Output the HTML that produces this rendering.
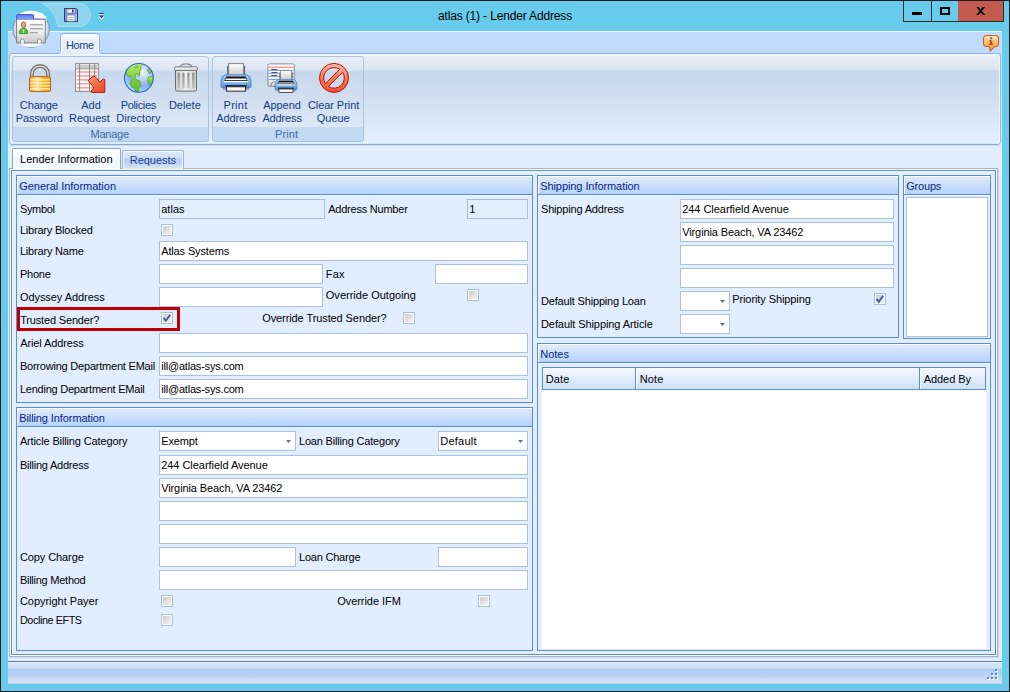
<!DOCTYPE html><html><head><meta charset="utf-8"><title>atlas (1) - Lender Address</title><style>html,body{margin:0;padding:0;width:1010px;height:692px;overflow:hidden;background:#1e1b1c;}body{position:relative;font-family:"Liberation Sans",sans-serif;font-size:11px;}div,svg,span.t{position:absolute;}svg{overflow:visible;}span.t{white-space:nowrap;}</style></head><body>
<div style="left:0px;top:0px;width:1010px;height:692px;background:#1e1b1c;"></div>
<div style="left:1px;top:1px;width:1008px;height:690px;background:#67cbeb;"></div>
<span class="t " style="top:9px;line-height:14px;font-size:12px;color:#000;letter-spacing:-0.153px;left:405px;width:200px;text-align:center;">atlas (1) - Lender Address</span>
<div style="left:903px;top:1px;width:101px;height:21px;background:#67cbeb;border:1px solid #2b2b2b;border-top:none;box-sizing:border-box;"></div>
<div style="left:931px;top:1px;width:1px;height:20px;background:#2b2b2b;"></div>
<div style="left:958px;top:1px;width:45px;height:20px;background:#c35a50;"></div>
<div style="left:912px;top:12px;width:10px;height:3px;background:#000;"></div>
<div style="left:940px;top:7px;width:10px;height:8px;border:2px solid #000;box-sizing:border-box;"></div>
<svg style="left:976px;top:7px" width="9.4" height="8" viewBox="0 0 10 9" preserveAspectRatio="none"><path d="M0.3 0h2.6l2.1 2.7L7.1 0h2.6L6.3 4.4 9.9 9H7.3L5 6.1 2.7 9H0.1l3.6-4.6z" fill="#000"/></svg>
<svg style="left:36px;top:2px" width="60" height="26" viewBox="0 0 60 26"><path d="M6.5 1.5H43A11.5 11.5 0 0 1 43 24.5H21.5A27 27 0 0 0 6.5 1.5Z" fill="#8fd4ed" stroke="#a6def2" stroke-width="1"/></svg>
<svg style="left:64px;top:8px" width="14" height="14" viewBox="0 0 14 14"><path d="M0.5 0.5H12L13.5 2V13.5H0.5Z" fill="#7f9be0" stroke="#2c3573" stroke-width="1"/><rect x="3" y="1" width="8" height="4" fill="#f4f4f4" stroke="#6a6a7a" stroke-width="0.6"/><rect x="8" y="1.6" width="1.6" height="2.8" fill="#2c3573"/><rect x="3" y="7" width="8" height="6.2" fill="#f2f2f2" stroke="#5a648c" stroke-width="0.6"/><rect x="4.5" y="9" width="5" height="0.8" fill="#a8a8a8"/><rect x="4.5" y="11" width="5" height="0.8" fill="#a8a8a8"/><rect x="11.6" y="6" width="1.4" height="7" fill="#b8c8f4"/></svg>
<svg style="left:98px;top:12px" width="8" height="9" viewBox="0 0 8 9"><rect x="1" y="1" width="5" height="1" fill="#1d3c98"/><rect x="1" y="2" width="5" height="1" fill="#fff"/><path d="M0.5 4.5h6L3.5 8.2z" fill="#fff"/><path d="M1 3.6h5L3.5 6.6z" fill="#1d3c98"/></svg>
<div style="left:8px;top:31px;width:994px;height:653px;background:#e2eeff;"></div>
<div style="left:8px;top:31px;width:994px;height:23px;background:#bfdbff;"></div>
<div style="left:8px;top:31px;width:994px;height:1px;background:#eef6ff;"></div>
<div style="left:8px;top:54px;width:994px;height:92px;background:linear-gradient(#bfdbff,#e2eeff);"></div>
<div style="left:9px;top:53px;width:992px;height:92px;box-sizing:border-box;border:1px solid #8db2e3;border-bottom-color:#8fa7cb;border-left-color:#9cb7de;border-right-color:#9cb7de;border-radius:4px;background:linear-gradient(#f4f7fb 0px,#eaf0f8 2px,#d9e4f1 16px,#c7d8ec 17px,#d1dff1 45px,#e3effd 86px);"></div>
<div style="left:11px;top:143px;width:988px;height:1px;background:#c9effb;"></div>
<div style="left:10px;top:145px;width:990px;height:1px;background:#cfdcf0;"></div>
<div style="left:10px;top:57px;width:1px;height:85px;background:#e6f6ff;"></div>
<div style="left:999px;top:57px;width:1px;height:85px;background:#e6f6ff;"></div>
<svg style="left:56px;top:32px" width="48" height="23" viewBox="0 0 48 23"><defs><linearGradient id="ht" x1="0" y1="0" x2="0" y2="1"><stop offset="0" stop-color="#ffffff"/><stop offset="0.25" stop-color="#edf2fa"/><stop offset="1" stop-color="#e6edf7"/></linearGradient></defs><path d="M1.5 21.5C3.5 21.5 4.5 20.5 4.5 18.5V4.5A3 3 0 0 1 7.5 1.5H40.5A3 3 0 0 1 43.5 4.5V18.5C43.5 20.5 44.5 21.5 46.5 21.5V22.6H1.5Z" fill="url(#ht)"/><path d="M5.5 21V5A2.5 2.5 0 0 1 8 2.5H40A2.5 2.5 0 0 1 42.5 5V21" fill="none" stroke="#f2fcff" stroke-width="1"/><path d="M1.5 21.5C3.5 21.5 4.5 20.5 4.5 18.5V4.5A3 3 0 0 1 7.5 1.5H40.5A3 3 0 0 1 43.5 4.5V18.5C43.5 20.5 44.5 21.5 46.5 21.5" fill="none" stroke="#8fb0e4" stroke-width="1"/><rect x="5" y="21" width="38" height="1.6" fill="#e8eef8"/></svg>
<span class="t " style="top:39px;line-height:13px;font-size:11px;color:#15428b;letter-spacing:-0.400px;left:66.0px;transform:scaleX(0.9984);transform-origin:0 50%;">Home</span>
<svg style="left:982px;top:34px" width="18" height="18" viewBox="0 0 18 18"><defs><linearGradient id="hg" x1="0" y1="0" x2="0" y2="1"><stop offset="0" stop-color="#ffe0a8"/><stop offset="0.45" stop-color="#ffbe6a"/><stop offset="1" stop-color="#ff9a28"/></linearGradient></defs><path d="M4.5 1.5H13.5A3 3 0 0 1 16.5 4.5V9.5A3 3 0 0 1 13.5 12.5H12.7L8.3 16.9L7.3 12.5H4.5A3 3 0 0 1 1.5 9.5V4.5A3 3 0 0 1 4.5 1.5Z" fill="url(#hg)" stroke="#c9602a" stroke-width="1.1"/><rect x="3.2" y="2.7" width="11.6" height="1.5" rx="0.75" fill="#fff" opacity="0.55"/><rect x="8" y="3.4" width="2.2" height="1.7" fill="#c2492a"/><path d="M7.2 6.2h3v3.6h1v1.2H7v-1.2h1.2V7.4h-1z" fill="#c2492a"/></svg>
<svg style="left:10px;top:8px" width="42" height="42" viewBox="0 0 42 42"><defs><linearGradient id="og" x1="0" y1="0" x2="0" y2="1"><stop offset="0" stop-color="#ffffff"/><stop offset="0.5" stop-color="#f2f5fa"/><stop offset="0.52" stop-color="#c9d5ea"/><stop offset="1" stop-color="#f4f8ff"/></linearGradient><linearGradient id="cg" x1="0" y1="0" x2="0" y2="1"><stop offset="0" stop-color="#ffffff"/><stop offset="0.55" stop-color="#ececec"/><stop offset="1" stop-color="#c4c4c4"/></linearGradient><linearGradient id="tg" x1="0" y1="0" x2="0" y2="1"><stop offset="0" stop-color="#5a7eea"/><stop offset="1" stop-color="#7fa4ff"/></linearGradient><radialGradient id="orb" cx="0.5" cy="0.5" r="0.5"><stop offset="0" stop-color="#ffffff"/><stop offset="0.8" stop-color="#eef2f9"/><stop offset="1" stop-color="#aebfdd"/></radialGradient></defs><circle cx="21.1" cy="21.1" r="18.2" fill="url(#orb)" stroke="#8498be" stroke-width="1"/><ellipse cx="21.1" cy="11.5" rx="15.5" ry="9" fill="#ffffff" opacity="0.92"/><ellipse cx="21.1" cy="33.5" rx="13.5" ry="5.5" fill="#ffffff" opacity="0.85"/><path d="M6.6 11.2H35.3V35H6.6Z" fill="url(#cg)" stroke="#7c7c7c" stroke-width="1"/><path d="M6.6 11.6V7.6A1 1 0 0 1 7.6 6.6H22.6A1 1 0 0 1 23.6 7.6V11.2" fill="url(#tg)" stroke="#4c4cc4" stroke-width="1"/><path d="M23.6 11.2H35.3" stroke="#8484c4" stroke-width="1" fill="none"/><path d="M9.3 25.6C9.3 21.5 11.3 20.2 13.5 20.2S17.8 21.5 17.8 25.6Z" fill="#4cc232" stroke="#2c8c1c" stroke-width="0.8"/><rect x="13" y="21.3" width="1.1" height="3.4" fill="#fff"/><ellipse cx="13.5" cy="16.8" rx="2.2" ry="2.8" fill="#e9aa7c" stroke="#8c3c2c" stroke-width="0.8"/><rect x="20" y="16.1" width="13" height="1.3" fill="#a6a6a6"/><rect x="20" y="20" width="13" height="1.3" fill="#a6a6a6"/><rect x="20" y="24" width="7.8" height="1.3" fill="#a6a6a6"/><path d="M10.4 35.6V33A2 2 0 0 1 14.4 33V35.6" fill="#eef2fa" stroke="#8a8a8a" stroke-width="0.9"/><path d="M27.4 35.6V33A2 2 0 0 1 31.4 33V35.6" fill="#eef2fa" stroke="#8a8a8a" stroke-width="0.9"/></svg>
<div style="left:12px;top:56px;width:197px;height:86px;box-sizing:border-box;border:1px solid #a9c3e1;border-radius:3px;background:linear-gradient(#e8eff8 0px,#dbe5f2 13px,#c8d8ec 14px,#d0deef 40px,#dde8f6 69px,#dde8f6 70px,#c2d9f1 70px,#c2d9f1 84px);"></div>
<span class="t " style="top:128px;line-height:13px;font-size:11px;color:#3e6aaa;letter-spacing:-0.211px;left:9.700000000000003px;width:200px;text-align:center;">Manage</span>
<div style="left:212px;top:56px;width:152px;height:86px;box-sizing:border-box;border:1px solid #a9c3e1;border-radius:3px;background:linear-gradient(#e8eff8 0px,#dbe5f2 13px,#c8d8ec 14px,#d0deef 40px,#dde8f6 69px,#dde8f6 70px,#c2d9f1 70px,#c2d9f1 84px);"></div>
<span class="t " style="top:128px;line-height:13px;font-size:11px;color:#3e6aaa;letter-spacing:0.115px;left:186.60000000000002px;width:200px;text-align:center;">Print</span>
<span class="t " style="top:99px;line-height:13px;font-size:11px;color:#123a86;letter-spacing:-0.091px;left:-61.2px;width:200px;text-align:center;">Change</span>
<span class="t " style="top:112px;line-height:13px;font-size:11px;color:#123a86;letter-spacing:-0.187px;left:-60.8px;width:200px;text-align:center;">Password</span>
<span class="t " style="top:99px;line-height:13px;font-size:11px;color:#123a86;letter-spacing:0.007px;left:-9.0px;width:200px;text-align:center;">Add</span>
<span class="t " style="top:112px;line-height:13px;font-size:11px;color:#123a86;letter-spacing:-0.055px;left:-10.599999999999994px;width:200px;text-align:center;">Request</span>
<span class="t " style="top:99px;line-height:13px;font-size:11px;color:#123a86;letter-spacing:-0.363px;left:38.30000000000001px;width:200px;text-align:center;">Policies</span>
<span class="t " style="top:112px;line-height:13px;font-size:11px;color:#123a86;letter-spacing:0.043px;left:38.400000000000006px;width:200px;text-align:center;">Directory</span>
<span class="t " style="top:99px;line-height:13px;font-size:11px;color:#123a86;letter-spacing:0.017px;left:84.85px;width:200px;text-align:center;">Delete</span>
<span class="t " style="top:99px;line-height:13px;font-size:11px;color:#123a86;letter-spacing:0.255px;left:135.55px;width:200px;text-align:center;">Print</span>
<span class="t " style="top:112px;line-height:13px;font-size:11px;color:#123a86;letter-spacing:-0.108px;left:136.0px;width:200px;text-align:center;">Address</span>
<span class="t " style="top:99px;line-height:13px;font-size:11px;color:#123a86;letter-spacing:-0.056px;left:182.0px;width:200px;text-align:center;">Append</span>
<span class="t " style="top:112px;line-height:13px;font-size:11px;color:#123a86;letter-spacing:-0.137px;left:182.10000000000002px;width:200px;text-align:center;">Address</span>
<span class="t " style="top:99px;line-height:13px;font-size:11px;color:#123a86;letter-spacing:-0.061px;left:233.55px;width:200px;text-align:center;">Clear Print</span>
<span class="t " style="top:112px;line-height:13px;font-size:11px;color:#123a86;letter-spacing:-0.026px;left:233.25px;width:200px;text-align:center;">Queue</span>
<svg style="left:24px;top:62px" width="32" height="32" viewBox="0 0 32 32"><defs><linearGradient id="sh" x1="0" y1="0" x2="1" y2="0"><stop offset="0" stop-color="#5c5c5c"/><stop offset="0.12" stop-color="#f4f4f4"/><stop offset="0.2" stop-color="#6a6a6a"/><stop offset="0.5" stop-color="#e8e8e8"/><stop offset="0.8" stop-color="#6a6a6a"/><stop offset="0.88" stop-color="#f4f4f4"/><stop offset="1" stop-color="#5c5c5c"/></linearGradient><linearGradient id="lb" x1="0" y1="0" x2="1" y2="0"><stop offset="0" stop-color="#f2a01a"/><stop offset="0.38" stop-color="#ffe9a0"/><stop offset="0.62" stop-color="#f7b62a"/><stop offset="1" stop-color="#f0a018"/></linearGradient></defs><path d="M7.9 15V12A8.1 8.1 0 0 1 24.1 12V15" fill="none" stroke="#6e6e6e" stroke-width="4"/><path d="M7.9 15V12A8.1 8.1 0 0 1 24.1 12V15" fill="none" stroke="#d9d9d9" stroke-width="1.5"/><rect x="5.5" y="14.5" width="21" height="15" rx="1.6" fill="url(#lb)" stroke="#b5652b" stroke-width="1"/><rect x="6.4" y="17.2" width="19.2" height="1.2" fill="#fff8d0" opacity="0.95"/><rect x="6.4" y="20.2" width="19.2" height="1.2" fill="#fff8d0" opacity="0.95"/><rect x="6.4" y="23.2" width="19.2" height="1.2" fill="#fff8d0" opacity="0.95"/><rect x="6.4" y="26.2" width="19.2" height="1.2" fill="#fff8d0" opacity="0.95"/></svg>
<svg style="left:74px;top:62px" width="32" height="32" viewBox="0 0 32 32"><defs><linearGradient id="ar" x1="0" y1="0" x2="1" y2="1"><stop offset="0" stop-color="#ffa27a"/><stop offset="0.5" stop-color="#f46a42"/><stop offset="1" stop-color="#e2482a"/></linearGradient></defs><rect x="1.6" y="1.7" width="22.7" height="27.6" fill="#fff" stroke="#838383" stroke-width="1"/><rect x="3" y="3" width="20" height="3.4" fill="#c9c9c9"/><rect x="3" y="9.2" width="20" height="1.6" fill="#ff9c9c"/><rect x="3" y="13.1" width="20" height="1.6" fill="#ff9c9c"/><rect x="3" y="17" width="20" height="1.6" fill="#ff9c9c"/><rect x="3" y="21" width="20" height="1.6" fill="#ff9c9c"/><rect x="3" y="25" width="20" height="1.6" fill="#ff9c9c"/><rect x="5.1" y="2" width="1" height="27" fill="#8a8a8a"/><rect x="15" y="2" width="1" height="27" fill="#8a8a8a"/><rect x="20.2" y="2" width="1" height="14" fill="#8a8a8a"/><rect x="2" y="6.4" width="22" height="0.9" fill="#8a8a8a"/><path d="M14.2 18.6L19 14.2L21 14.4L25.8 20L29.3 17L30.8 17.6V30.4H17.6L17 28.8L20.2 26Z" fill="url(#ar)" stroke="#b01c1c" stroke-width="1" stroke-linejoin="round"/></svg>
<svg style="left:123px;top:62px" width="32" height="32" viewBox="0 0 32 32"><defs><radialGradient id="oc" cx="0.62" cy="0.3" r="0.75"><stop offset="0" stop-color="#eef3ff"/><stop offset="0.35" stop-color="#bcd2fb"/><stop offset="0.65" stop-color="#86adf3"/><stop offset="1" stop-color="#a6e6ff"/></radialGradient><linearGradient id="ld" x1="0" y1="0" x2="0" y2="1"><stop offset="0" stop-color="#b8f06c"/><stop offset="0.5" stop-color="#86cf40"/><stop offset="1" stop-color="#62b828"/></linearGradient><clipPath id="gc"><circle cx="15.85" cy="15.85" r="14.3"/></clipPath></defs><circle cx="15.85" cy="15.85" r="14.4" fill="url(#oc)"/><g clip-path="url(#gc)" fill="url(#ld)" stroke="#4ea820" stroke-width="0.8" stroke-linejoin="round"><path d="M21 0.5L19.9 2.2L17.3 5.8L18.6 6.6L17 7.9L16.5 10L16.8 13.1L15.7 14.6L14.9 13.6L14.7 11.5L13.1 11.8L12.1 13.6L12.1 16.2L13.1 17.5L16.3 18.8L17.8 20.9L17.3 24L15.5 26.1L15.7 31H12.3L12.1 26.4L9 25.1L7.1 22.5L7.4 19.9L10 17.3L8.2 15.2L6.4 13.1L5.6 14.6L4.3 13.6L3 10L0 8L4 0Z"/><path d="M25.4 6.3L28.2 10L26.7 11.8L24.6 9.2L24.3 7.9Z"/><path d="M32 14L26.1 14.6L24.6 17.3L25.1 20.9L27.2 23.8L32 22Z"/></g><ellipse cx="13.4" cy="5" rx="1.9" ry="0.9" transform="rotate(-25 13.4 5)" fill="#7fd3a0" stroke="#4ea820" stroke-width="0.5"/><circle cx="15.85" cy="15.85" r="14.4" fill="none" stroke="#2f63d2" stroke-width="1.1"/></svg>
<svg style="left:170px;top:62px" width="32" height="32" viewBox="0 0 32 32"><defs><linearGradient id="tb" x1="0" y1="0" x2="1" y2="0"><stop offset="0" stop-color="#d0d0d0"/><stop offset="0.5" stop-color="#f2f2f2"/><stop offset="1" stop-color="#cfcfcf"/></linearGradient><linearGradient id="tl" x1="0" y1="0" x2="0" y2="1"><stop offset="0" stop-color="#ffffff"/><stop offset="1" stop-color="#cdcdcd"/></linearGradient><linearGradient id="tr" x1="0" y1="0" x2="0" y2="1"><stop offset="0" stop-color="#8f8f8f"/><stop offset="1" stop-color="#c4c4c4"/></linearGradient></defs><path d="M10 5C11 2.2 14 1.9 16 1.9S21 2.2 22.2 5" fill="none" stroke="#8e8e8e" stroke-width="1.3"/><path d="M5.5 8.2H26.5V27.5A1.6 1.6 0 0 1 24.9 29.1H7.1A1.6 1.6 0 0 1 5.5 27.5Z" fill="url(#tb)" stroke="#6a6a6a" stroke-width="1"/><rect x="7.6" y="10.6" width="2.4" height="16" rx="1.2" fill="url(#tr)"/><rect x="12.2" y="10.6" width="2.4" height="16" rx="1.2" fill="url(#tr)"/><rect x="17.2" y="10.6" width="2.4" height="16" rx="1.2" fill="url(#tr)"/><rect x="22.1" y="10.6" width="2.4" height="16" rx="1.2" fill="url(#tr)"/><rect x="4.5" y="4.9" width="23" height="3.6" rx="1.4" fill="url(#tl)" stroke="#7a7a7a" stroke-width="1"/></svg>
<svg style="left:220px;top:62px" width="32" height="32" viewBox="0 0 32 32"><defs><linearGradient id="pp" x1="0" y1="0" x2="0" y2="1"><stop offset="0" stop-color="#ffffff"/><stop offset="1" stop-color="#c6c6c6"/></linearGradient><linearGradient id="pb" x1="0" y1="0" x2="0" y2="1"><stop offset="0" stop-color="#a4c8ec"/><stop offset="0.6" stop-color="#7fb2e2"/><stop offset="1" stop-color="#5a90d0"/></linearGradient><linearGradient id="pt" x1="0" y1="0" x2="0" y2="1"><stop offset="0" stop-color="#9a9a9a"/><stop offset="0.35" stop-color="#ffffff"/><stop offset="1" stop-color="#e4e4e4"/></linearGradient></defs><g id="prn"><rect x="7.1" y="4" width="18" height="10" fill="#646464"/><rect x="8.6" y="1.6" width="15" height="12.6" fill="url(#pp)" stroke="#838383" stroke-width="1"/><path d="M5.2 12.8H26.8C29.8 13.6 31 17 31 20.5V24.2A1.8 1.8 0 0 1 29.2 26H2.8A1.8 1.8 0 0 1 1 24.2V20.5C1 17 2.2 13.6 5.2 12.8Z" fill="url(#pb)" stroke="#3f72c6" stroke-width="0.8"/><path d="M6.6 14.4H25.4L27.8 18.8H4.2Z" fill="#161616"/><path d="M6 16.5H26L26.8 18H5.2Z" fill="#fff"/><rect x="3.8" y="19" width="24.4" height="1.2" fill="#ffffff"/><rect x="5" y="23" width="22" height="1.4" fill="#14307e"/><rect x="3.2" y="26" width="3.4" height="2" fill="#9a9a9a"/><rect x="25.4" y="26" width="3.4" height="2" fill="#9a9a9a"/><rect x="6.5" y="24.2" width="19" height="5" fill="url(#pt)" stroke="#1c1c1c" stroke-width="0.9"/><rect x="7" y="24.2" width="18" height="1" fill="#3a3a3a"/><circle cx="26.4" cy="21.4" r="0.95" fill="#36d23a"/></g></svg>
<svg style="left:266px;top:62px" width="32" height="32" viewBox="0 0 32 32"><defs><linearGradient id="dg" x1="0" y1="0" x2="0" y2="1"><stop offset="0" stop-color="#ffffff"/><stop offset="0.6" stop-color="#f4f4f4"/><stop offset="1" stop-color="#d4d4d4"/></linearGradient></defs><rect x="1.9" y="1.9" width="26.4" height="22.4" rx="1.4" fill="url(#dg)" stroke="#8c8c8c" stroke-width="1"/><rect x="2.4" y="4.7" width="25.4" height="1.2" fill="#ff8a8a"/><rect x="2.4" y="7.9" width="25.4" height="1" fill="#7ca4f2"/><rect x="2.4" y="10.9" width="25.4" height="1" fill="#7ca4f2"/><rect x="2.4" y="13.9" width="25.4" height="1" fill="#7ca4f2"/><rect x="2.4" y="17" width="25.4" height="1" fill="#7ca4f2"/><rect x="5.3" y="7" width="6" height="1" fill="#585858"/><rect x="5.3" y="10" width="6" height="1" fill="#585858"/><rect x="5.3" y="13" width="6" height="1" fill="#585858"/><path d="M5 24C5 21 6.5 19.6 8.4 19.6" fill="none" stroke="#8c8c8c" stroke-width="1"/><g transform="translate(8.2,7.2) scale(0.735,0.8)"><use href="#prn"/></g></svg>
<svg style="left:318px;top:62px" width="32" height="32" viewBox="0 0 32 32"><defs><linearGradient id="ng" x1="0" y1="0" x2="0" y2="1"><stop offset="0" stop-color="#ffc0a2"/><stop offset="0.45" stop-color="#fa7e5a"/><stop offset="1" stop-color="#ee5232"/></linearGradient></defs><path fill-rule="evenodd" d="M16 1.4A14.5 14.5 0 1 0 16 30.4A14.5 14.5 0 1 0 16 1.4ZM7.38 21.55A10.3 10.3 0 0 1 21.65 7.28ZM24.62 10.25A10.3 10.3 0 0 1 10.35 24.52Z" fill="url(#ng)" stroke="#b41414" stroke-width="1"/></svg>
<div style="left:9px;top:168px;width:989px;height:489px;box-sizing:border-box;border:1px solid #a8b4cc;background:#fdfeff;box-shadow:1px 1px 0 rgba(160,172,200,0.35);"></div>
<div style="left:11px;top:170px;width:985px;height:485px;box-sizing:border-box;border:1px solid #5d8dd1;background:#e2eeff;box-shadow:inset 1px 1px 0 #eef5ff;"></div>
<div style="left:122px;top:150px;width:62px;height:19px;box-sizing:border-box;border:1px solid #9db4da;border-bottom:none;border-radius:2px 2px 0 0;background:linear-gradient(#dfe9f9 0px,#d3e1f6 6px,#b7cef0 9px,#bcd2f1 12px,#dbe7f9 18px);box-shadow:inset 1px 1px 0 #f2f7fe, inset -1px 0 0 #f2f7fe;"></div>
<span class="t " style="top:154px;line-height:13px;font-size:11px;color:#1b3f98;letter-spacing:-0.036px;left:129.79999999999998px;">Requests</span>
<div style="left:12px;top:148px;width:109px;height:21px;box-sizing:border-box;border:1px solid #8fa5cb;border-bottom:none;border-radius:2px 2px 0 0;background:linear-gradient(#ffffff,#f1f6fe 12px,#f4f8ff);"></div>
<div style="left:13px;top:169px;width:107px;height:1px;background:#f4f8ff;"></div>
<span class="t " style="top:153px;line-height:13px;font-size:11px;color:#000;letter-spacing:0.014px;left:20.0px;">Lender Information</span>
<div style="left:16px;top:175px;width:517px;height:228px;box-sizing:border-box;border:1px solid #5d8dd1;background:#e2eeff;"></div>
<div style="left:17px;top:176px;width:515px;height:18px;background:linear-gradient(#ffffff 0px,#ffffff 1px,#deeafd 1px,#cbe0fc 9px,#b4d3fd 18px);box-shadow:inset 1px 0 0 #fff;"></div>
<div style="left:17px;top:194px;width:515px;height:1px;background:#5d8dd1;"></div>
<div style="left:17px;top:195px;width:515px;height:1px;background:#ebf3fe;"></div>
<span class="t " style="top:180px;line-height:13px;font-size:11px;color:#0b1f84;letter-spacing:-0.022px;left:19.2px;">General Information</span>
<div style="left:16px;top:407px;width:517px;height:244px;box-sizing:border-box;border:1px solid #5d8dd1;background:#e2eeff;"></div>
<div style="left:17px;top:408px;width:515px;height:18px;background:linear-gradient(#ffffff 0px,#ffffff 1px,#deeafd 1px,#cbe0fc 9px,#b4d3fd 18px);box-shadow:inset 1px 0 0 #fff;"></div>
<div style="left:17px;top:426px;width:515px;height:1px;background:#5d8dd1;"></div>
<div style="left:17px;top:427px;width:515px;height:1px;background:#ebf3fe;"></div>
<span class="t " style="top:412px;line-height:13px;font-size:11px;color:#0b1f84;letter-spacing:-0.091px;left:19.2px;">Billing Information</span>
<div style="left:537px;top:175px;width:362px;height:163px;box-sizing:border-box;border:1px solid #5d8dd1;background:#e2eeff;"></div>
<div style="left:538px;top:176px;width:360px;height:18px;background:linear-gradient(#ffffff 0px,#ffffff 1px,#deeafd 1px,#cbe0fc 9px,#b4d3fd 18px);box-shadow:inset 1px 0 0 #fff;"></div>
<div style="left:538px;top:194px;width:360px;height:1px;background:#5d8dd1;"></div>
<div style="left:538px;top:195px;width:360px;height:1px;background:#ebf3fe;"></div>
<span class="t " style="top:180px;line-height:13px;font-size:11px;color:#0b1f84;letter-spacing:-0.075px;left:540.2px;">Shipping Information</span>
<div style="left:903px;top:175px;width:88px;height:164px;box-sizing:border-box;border:1px solid #5d8dd1;background:#e2eeff;"></div>
<div style="left:904px;top:176px;width:86px;height:18px;background:linear-gradient(#ffffff 0px,#ffffff 1px,#deeafd 1px,#cbe0fc 9px,#b4d3fd 18px);box-shadow:inset 1px 0 0 #fff;"></div>
<div style="left:904px;top:194px;width:86px;height:1px;background:#5d8dd1;"></div>
<div style="left:904px;top:195px;width:86px;height:1px;background:#ebf3fe;"></div>
<span class="t " style="top:180px;line-height:13px;font-size:11px;color:#0b1f84;letter-spacing:-0.180px;left:906.2px;">Groups</span>
<div style="left:537px;top:343px;width:454px;height:308px;box-sizing:border-box;border:1px solid #5d8dd1;background:#e2eeff;"></div>
<div style="left:538px;top:344px;width:452px;height:18px;background:linear-gradient(#ffffff 0px,#ffffff 1px,#deeafd 1px,#cbe0fc 9px,#b4d3fd 18px);box-shadow:inset 1px 0 0 #fff;"></div>
<div style="left:538px;top:362px;width:452px;height:1px;background:#5d8dd1;"></div>
<div style="left:538px;top:363px;width:452px;height:1px;background:#ebf3fe;"></div>
<span class="t " style="top:348px;line-height:13px;font-size:11px;color:#0b1f84;letter-spacing:0.010px;left:540.2px;">Notes</span>
<span class="t " style="top:203px;line-height:13px;font-size:11px;color:#000;letter-spacing:-0.331px;left:19.9px;">Symbol</span>
<div style="left:159px;top:199px;width:166px;height:20px;box-sizing:border-box;border:1px solid #a7bde2;background:#e3eefe;"></div>
<span class="t " style="top:203px;line-height:13px;font-size:11px;color:#000;letter-spacing:0.030px;left:161.2px;">atlas</span>
<span class="t " style="top:203px;line-height:13px;font-size:11px;color:#000;letter-spacing:-0.225px;left:328.2px;">Address Number</span>
<div style="left:467px;top:199px;width:61px;height:20px;box-sizing:border-box;border:1px solid #a7bde2;background:#e3eefe;"></div>
<span class="t " style="top:203px;line-height:13px;font-size:11px;color:#000;letter-spacing:0.775px;left:469.2px;">1</span>
<span class="t " style="top:224px;line-height:13px;font-size:11px;color:#000;letter-spacing:-0.209px;left:19.9px;">Library Blocked</span>
<div style="left:161px;top:224px;width:12px;height:12px;box-sizing:border-box;border:1px solid #a9bfe0;background:#fff;"></div>
<div style="left:163px;top:226px;width:8px;height:8px;background:linear-gradient(135deg,#c8cbd0,#f4f5f7);"></div>
<span class="t " style="top:245px;line-height:13px;font-size:11px;color:#000;letter-spacing:-0.186px;left:19.9px;">Library Name</span>
<div style="left:159px;top:241px;width:369px;height:20px;box-sizing:border-box;border:1px solid #a9c1e4;background:#fff;"></div>
<span class="t " style="top:245px;line-height:13px;font-size:11px;color:#000;letter-spacing:-0.137px;left:161.2px;">Atlas Systems</span>
<span class="t " style="top:268px;line-height:13px;font-size:11px;color:#000;letter-spacing:-0.203px;left:19.9px;">Phone</span>
<div style="left:159px;top:264px;width:164px;height:20px;box-sizing:border-box;border:1px solid #a9c1e4;background:#fff;"></div>
<span class="t " style="top:268px;line-height:13px;font-size:11px;color:#000;letter-spacing:0.152px;left:325.8px;">Fax</span>
<div style="left:435px;top:264px;width:93px;height:20px;box-sizing:border-box;border:1px solid #a9c1e4;background:#fff;"></div>
<span class="t " style="top:291px;line-height:13px;font-size:11px;color:#000;letter-spacing:-0.053px;left:19.9px;">Odyssey Address</span>
<div style="left:159px;top:287px;width:164px;height:20px;box-sizing:border-box;border:1px solid #a9c1e4;background:#fff;"></div>
<span class="t " style="top:289px;line-height:13px;font-size:11px;color:#000;letter-spacing:0.012px;left:325.8px;">Override Outgoing</span>
<div style="left:467px;top:289px;width:12px;height:12px;box-sizing:border-box;border:1px solid #a9bfe0;background:#fff;"></div>
<div style="left:469px;top:291px;width:8px;height:8px;background:linear-gradient(135deg,#c8cbd0,#f4f5f7);"></div>
<div style="left:17px;top:307px;width:163px;height:24px;box-sizing:border-box;border:3px solid #c00000;"></div>
<span class="t " style="top:314px;line-height:13px;font-size:11px;color:#000;letter-spacing:-0.169px;left:20.2px;">Trusted Sender?</span>
<div style="left:161px;top:312px;width:12px;height:12px;box-sizing:border-box;border:1px solid #a9bfe0;background:#fff;"></div>
<div style="left:163px;top:314px;width:8px;height:8px;background:linear-gradient(135deg,#c8cbd0,#f4f5f7);"></div>
<svg style="left:162px;top:313px" width="10" height="10" viewBox="0 0 10 10"><path d="M1.6 4.8L3.9 7.6L8.2 1.8" fill="none" stroke="#3c609f" stroke-width="1.9" stroke-linejoin="miter"/></svg>
<span class="t " style="top:312px;line-height:13px;font-size:11px;color:#000;letter-spacing:-0.091px;left:262.2px;">Override Trusted Sender?</span>
<div style="left:403px;top:312px;width:12px;height:12px;box-sizing:border-box;border:1px solid #a9bfe0;background:#fff;"></div>
<div style="left:405px;top:314px;width:8px;height:8px;background:linear-gradient(135deg,#c8cbd0,#f4f5f7);"></div>
<span class="t " style="top:337px;line-height:13px;font-size:11px;color:#000;letter-spacing:-0.109px;left:20.2px;">Ariel Address</span>
<div style="left:159px;top:333px;width:369px;height:20px;box-sizing:border-box;border:1px solid #a9c1e4;background:#fff;"></div>
<span class="t " style="top:360px;line-height:13px;font-size:11px;color:#000;letter-spacing:-0.213px;left:19.9px;">Borrowing Department EMail</span>
<div style="left:159px;top:356px;width:369px;height:20px;box-sizing:border-box;border:1px solid #a9c1e4;background:#fff;"></div>
<span class="t " style="top:360px;line-height:13px;font-size:11px;color:#000;letter-spacing:-0.196px;left:161.2px;">ill@atlas-sys.com</span>
<span class="t " style="top:383px;line-height:13px;font-size:11px;color:#000;letter-spacing:-0.231px;left:19.9px;">Lending Department EMail</span>
<div style="left:159px;top:379px;width:369px;height:20px;box-sizing:border-box;border:1px solid #a9c1e4;background:#fff;"></div>
<span class="t " style="top:383px;line-height:13px;font-size:11px;color:#000;letter-spacing:-0.196px;left:161.2px;">ill@atlas-sys.com</span>
<span class="t " style="top:435px;line-height:13px;font-size:11px;color:#000;letter-spacing:-0.136px;left:19.9px;">Article Billing Category</span>
<div style="left:159px;top:431px;width:137px;height:20px;box-sizing:border-box;border:1px solid #a9c1e4;background:#fff;"></div>
<span class="t " style="top:435px;line-height:13px;font-size:11px;color:#000;letter-spacing:-0.116px;left:161.2px;">Exempt</span>
<svg style="left:286px;top:440px" width="5" height="3" viewBox="0 0 5 3"><path d="M0 0H5L2.5 3Z" fill="#4a76b6"/></svg>
<span class="t " style="top:435px;line-height:13px;font-size:11px;color:#000;letter-spacing:-0.189px;left:299.0px;">Loan Billing Category</span>
<div style="left:438px;top:431px;width:90px;height:20px;box-sizing:border-box;border:1px solid #a9c1e4;background:#fff;"></div>
<span class="t " style="top:435px;line-height:13px;font-size:11px;color:#000;letter-spacing:0.249px;left:440.2px;">Default</span>
<svg style="left:518px;top:440px" width="5" height="3" viewBox="0 0 5 3"><path d="M0 0H5L2.5 3Z" fill="#4a76b6"/></svg>
<span class="t " style="top:459px;line-height:13px;font-size:11px;color:#000;letter-spacing:-0.224px;left:19.9px;">Billing Address</span>
<div style="left:159px;top:455px;width:369px;height:20px;box-sizing:border-box;border:1px solid #a9c1e4;background:#fff;"></div>
<span class="t " style="top:459px;line-height:13px;font-size:11px;color:#000;letter-spacing:-0.040px;left:161.2px;">244 Clearfield Avenue</span>
<div style="left:159px;top:478px;width:369px;height:20px;box-sizing:border-box;border:1px solid #a9c1e4;background:#fff;"></div>
<span class="t " style="top:482px;line-height:13px;font-size:11px;color:#000;letter-spacing:-0.106px;left:161.2px;">Virginia Beach, VA 23462</span>
<div style="left:159px;top:501px;width:369px;height:20px;box-sizing:border-box;border:1px solid #a9c1e4;background:#fff;"></div>
<div style="left:159px;top:524px;width:369px;height:20px;box-sizing:border-box;border:1px solid #a9c1e4;background:#fff;"></div>
<span class="t " style="top:551px;line-height:13px;font-size:11px;color:#000;letter-spacing:-0.093px;left:19.9px;">Copy Charge</span>
<div style="left:159px;top:547px;width:137px;height:20px;box-sizing:border-box;border:1px solid #a9c1e4;background:#fff;"></div>
<span class="t " style="top:551px;line-height:13px;font-size:11px;color:#000;letter-spacing:-0.210px;left:299.0px;">Loan Charge</span>
<div style="left:438px;top:547px;width:90px;height:20px;box-sizing:border-box;border:1px solid #a9c1e4;background:#fff;"></div>
<span class="t " style="top:574px;line-height:13px;font-size:11px;color:#000;letter-spacing:-0.250px;left:19.9px;">Billing Method</span>
<div style="left:159px;top:570px;width:369px;height:20px;box-sizing:border-box;border:1px solid #a9c1e4;background:#fff;"></div>
<span class="t " style="top:595px;line-height:13px;font-size:11px;color:#000;letter-spacing:-0.032px;left:19.9px;">Copyright Payer</span>
<div style="left:161px;top:595px;width:12px;height:12px;box-sizing:border-box;border:1px solid #a9bfe0;background:#fff;"></div>
<div style="left:163px;top:597px;width:8px;height:8px;background:linear-gradient(135deg,#c8cbd0,#f4f5f7);"></div>
<span class="t " style="top:595px;line-height:13px;font-size:11px;color:#000;letter-spacing:-0.049px;left:337.2px;">Override IFM</span>
<div style="left:478px;top:595px;width:12px;height:12px;box-sizing:border-box;border:1px solid #a9bfe0;background:#fff;"></div>
<div style="left:480px;top:597px;width:8px;height:8px;background:linear-gradient(135deg,#c8cbd0,#f4f5f7);"></div>
<span class="t " style="top:614px;line-height:13px;font-size:11px;color:#000;letter-spacing:-0.400px;left:19.9px;transform:scaleX(0.9769);transform-origin:0 50%;">Docline EFTS</span>
<div style="left:161px;top:614px;width:12px;height:12px;box-sizing:border-box;border:1px solid #a9bfe0;background:#fff;"></div>
<div style="left:163px;top:616px;width:8px;height:8px;background:linear-gradient(135deg,#c8cbd0,#f4f5f7);"></div>
<span class="t " style="top:203px;line-height:13px;font-size:11px;color:#000;letter-spacing:-0.177px;left:541.0px;">Shipping Address</span>
<div style="left:680px;top:199px;width:214px;height:20px;box-sizing:border-box;border:1px solid #a9c1e4;background:#fff;"></div>
<span class="t " style="top:203px;line-height:13px;font-size:11px;color:#000;letter-spacing:-0.040px;left:682.2px;">244 Clearfield Avenue</span>
<div style="left:680px;top:222px;width:214px;height:20px;box-sizing:border-box;border:1px solid #a9c1e4;background:#fff;"></div>
<span class="t " style="top:226px;line-height:13px;font-size:11px;color:#000;letter-spacing:-0.106px;left:682.2px;">Virginia Beach, VA 23462</span>
<div style="left:680px;top:245px;width:214px;height:20px;box-sizing:border-box;border:1px solid #a9c1e4;background:#fff;"></div>
<div style="left:680px;top:268px;width:214px;height:20px;box-sizing:border-box;border:1px solid #a9c1e4;background:#fff;"></div>
<span class="t " style="top:295px;line-height:13px;font-size:11px;color:#000;letter-spacing:-0.169px;left:541.0px;">Default Shipping Loan</span>
<div style="left:680px;top:291px;width:50px;height:20px;box-sizing:border-box;border:1px solid #a9c1e4;background:#fff;"></div>
<svg style="left:720px;top:300px" width="5" height="3" viewBox="0 0 5 3"><path d="M0 0H5L2.5 3Z" fill="#4a76b6"/></svg>
<span class="t " style="top:293px;line-height:13px;font-size:11px;color:#000;letter-spacing:-0.088px;left:732.2px;">Priority Shipping</span>
<div style="left:874px;top:293px;width:12px;height:12px;box-sizing:border-box;border:1px solid #a9bfe0;background:#fff;"></div>
<div style="left:876px;top:295px;width:8px;height:8px;background:linear-gradient(135deg,#c8cbd0,#f4f5f7);"></div>
<svg style="left:875px;top:294px" width="10" height="10" viewBox="0 0 10 10"><path d="M1.6 4.8L3.9 7.6L8.2 1.8" fill="none" stroke="#3c609f" stroke-width="1.9" stroke-linejoin="miter"/></svg>
<span class="t " style="top:318px;line-height:13px;font-size:11px;color:#000;letter-spacing:-0.085px;left:541.0px;">Default Shipping Article</span>
<div style="left:680px;top:314px;width:50px;height:20px;box-sizing:border-box;border:1px solid #a9c1e4;background:#fff;"></div>
<svg style="left:720px;top:323px" width="5" height="3" viewBox="0 0 5 3"><path d="M0 0H5L2.5 3Z" fill="#4a76b6"/></svg>
<div style="left:906px;top:197px;width:82px;height:140px;box-sizing:border-box;border:1px solid #a9c1e4;background:#fff;"></div>
<div style="left:542px;top:367px;width:444px;height:282px;background:#fff;"></div>
<div style="left:542px;top:367px;width:444px;height:23px;box-sizing:border-box;border:1px solid #5d8dd1;background:linear-gradient(#f7faff 0px,#e6effc 8px,#cfe0f9 21px);"></div>
<div style="left:635px;top:368px;width:1px;height:21px;background:#5d8dd1;"></div>
<div style="left:636px;top:368px;width:1px;height:21px;background:#f7faff;"></div>
<div style="left:919px;top:368px;width:1px;height:21px;background:#5d8dd1;"></div>
<div style="left:920px;top:368px;width:1px;height:21px;background:#f7faff;"></div>
<span class="t " style="top:373px;line-height:13px;font-size:11px;color:#000;letter-spacing:0.112px;left:545.8000000000001px;">Date</span>
<span class="t " style="top:373px;line-height:13px;font-size:11px;color:#000;letter-spacing:0.162px;left:639.7px;">Note</span>
<span class="t " style="top:373px;line-height:13px;font-size:11px;color:#000;letter-spacing:-0.063px;left:923.7px;">Added By</span>
<div style="left:8px;top:661px;width:994px;height:1px;background:#567db6;"></div>
<div style="left:8px;top:662px;width:994px;height:22px;background:linear-gradient(#f4f8ff 0px,#d8e6fa 1px,#cfe0f8 6px,#aecbf3 7px,#b8d2f4 13px,#d3e3f8 20px,#c3d3ea 22px);"></div>
<svg style="left:987px;top:669px" width="12" height="12" viewBox="0 0 12 12"><rect x="9" y="1" width="2" height="2" fill="#fff"/><rect x="8" y="0" width="2" height="2" fill="#5f86c6"/><rect x="5" y="5" width="2" height="2" fill="#fff"/><rect x="4" y="4" width="2" height="2" fill="#5f86c6"/><rect x="9" y="5" width="2" height="2" fill="#fff"/><rect x="8" y="4" width="2" height="2" fill="#5f86c6"/><rect x="1" y="9" width="2" height="2" fill="#fff"/><rect x="0" y="8" width="2" height="2" fill="#5f86c6"/><rect x="5" y="9" width="2" height="2" fill="#fff"/><rect x="4" y="8" width="2" height="2" fill="#5f86c6"/><rect x="9" y="9" width="2" height="2" fill="#fff"/><rect x="8" y="8" width="2" height="2" fill="#5f86c6"/></svg>
</body></html>
